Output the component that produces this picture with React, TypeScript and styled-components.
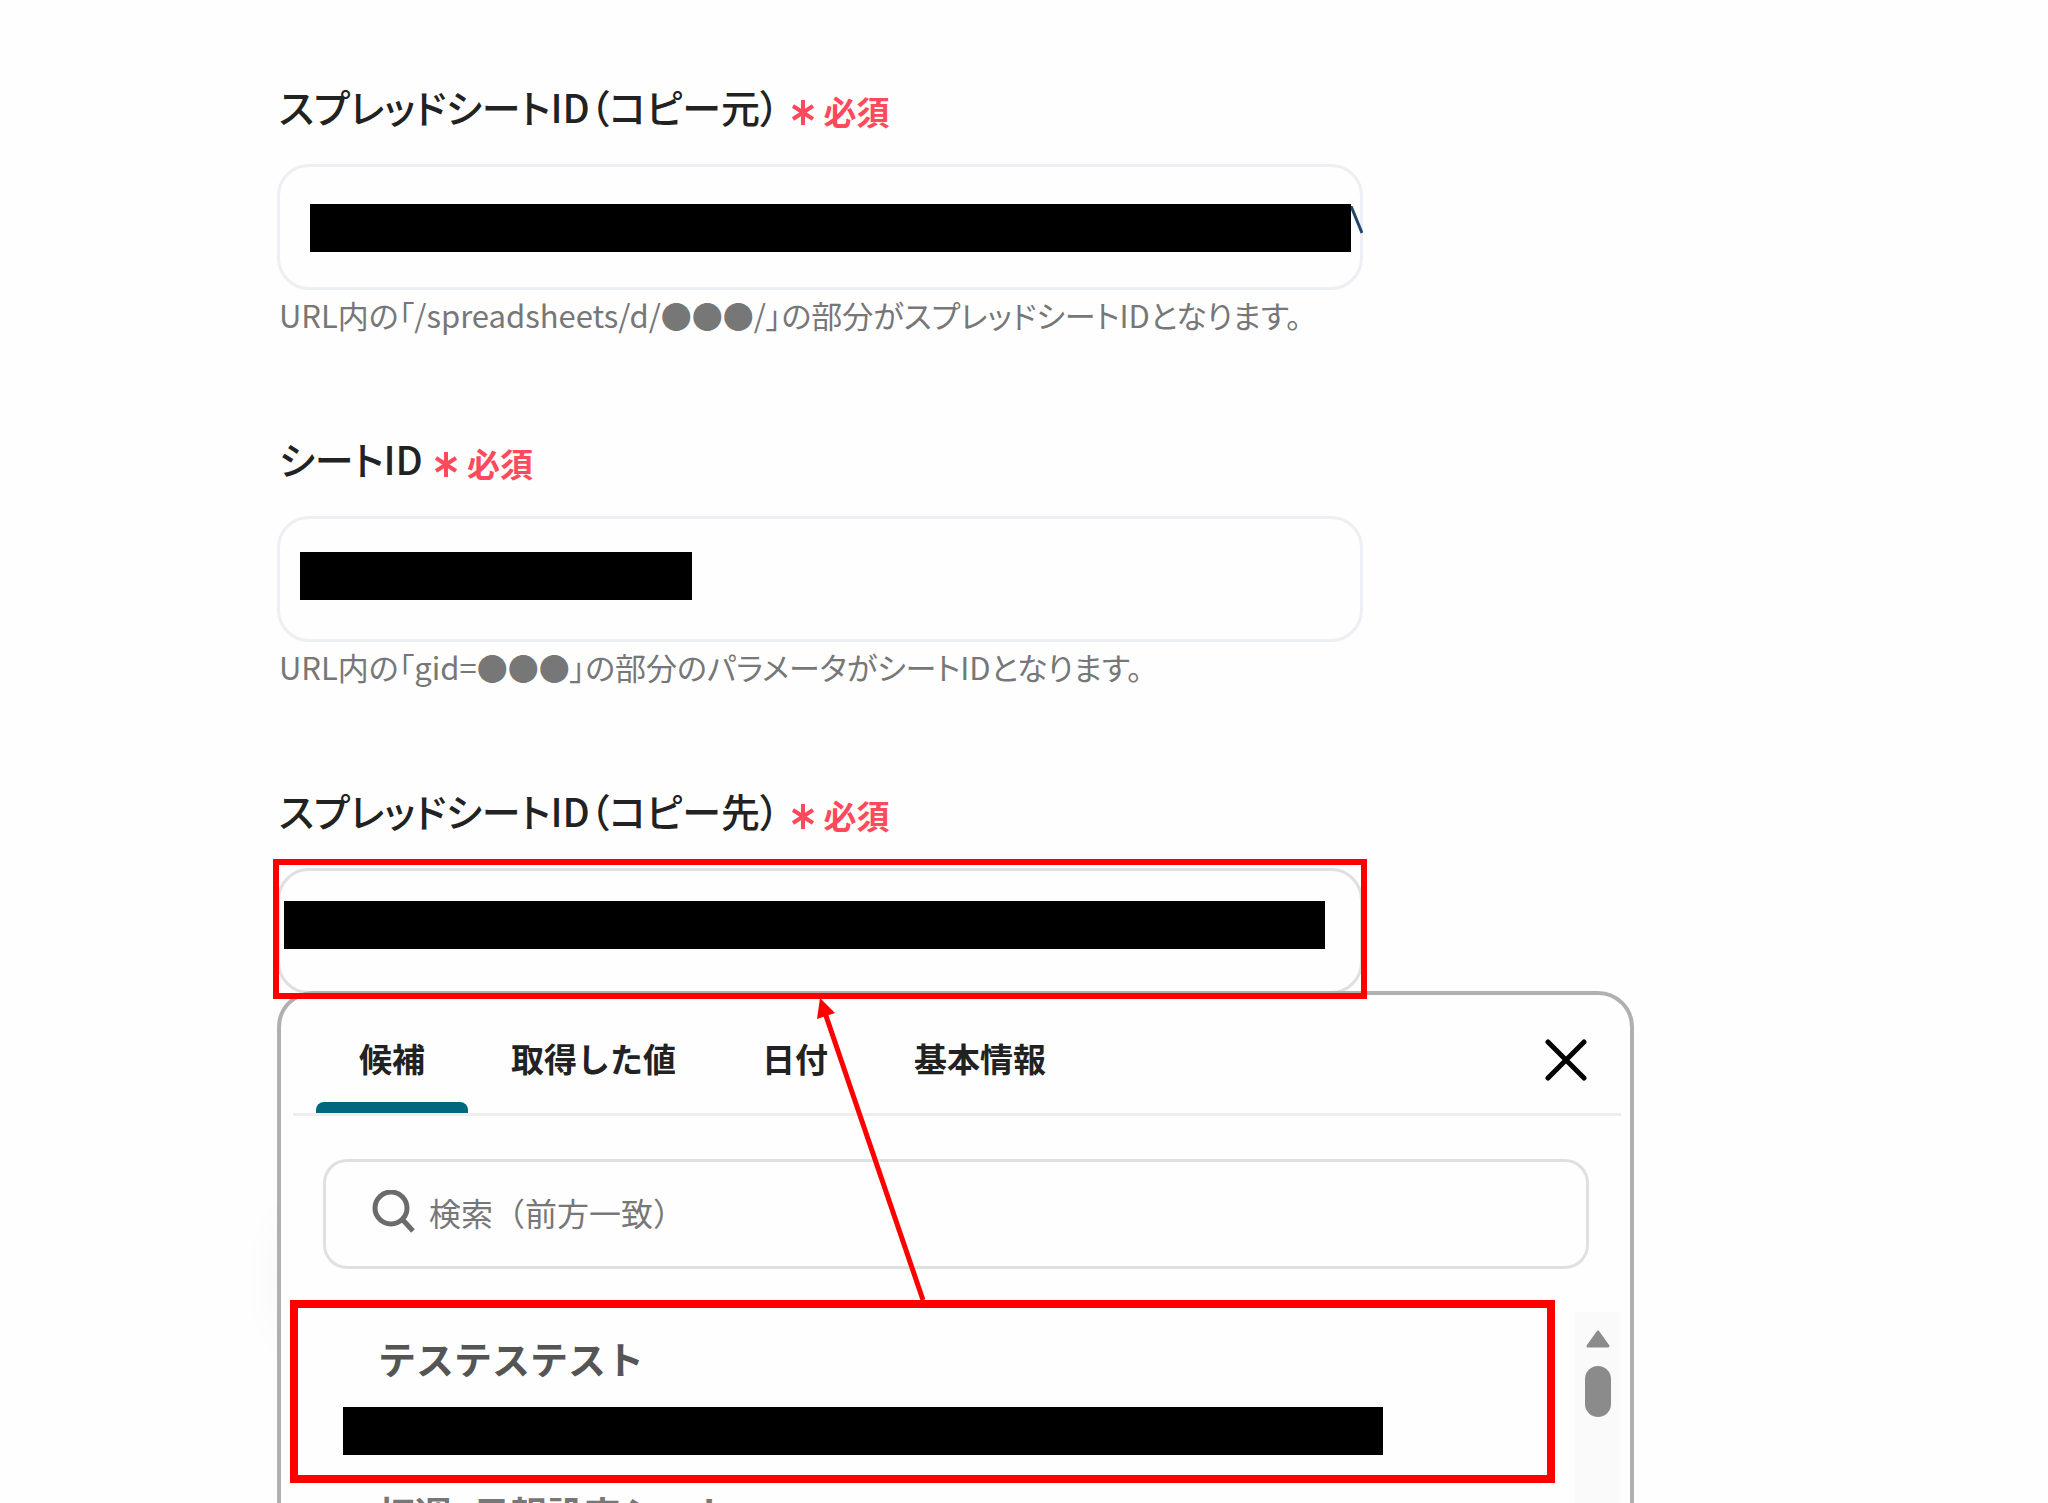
import React from "react";
import styled, { createGlobalStyle } from "styled-components";

const GlobalStyle = createGlobalStyle`
  *, *::before, *::after { box-sizing: border-box; }
  body {
    margin: 0;
    background: #fefefe;
    color: #222;
    font-family: "Noto Sans CJK JP", sans-serif;
  }
  button, input { font: inherit; color: inherit; margin: 0; padding: 0; }
`;

const Page = styled.main`
  height: 100vh;
  overflow: hidden;
  padding: 82px 20.2% 0 277px;
`;

const Form = styled.form`
  display: flex;
  flex-direction: column;
  position: relative;
`;

const Field = styled.div`
  display: flex;
  flex-direction: column;
  height: 352px;
  margin-right: 20%;
`;

const Heading = styled.div`
  display: flex;
  align-items: center;
  gap: 10px;
  height: 48px;
  margin-bottom: 34px;
  padding-left: 2px;
`;

const Label = styled.label`
  font-size: 39px;
  line-height: 48px;
  font-weight: 500;
  font-feature-settings: "palt";
`;

const Required = styled.span`
  display: flex;
  align-items: center;
  gap: 8px;
  padding-top: 9px;
  color: #ff4a5c;
  font-size: 33px;
  line-height: 40px;
  font-weight: 700;
`;

const InputWrap = styled.div`
  position: relative;
  flex: none;
`;

const TextInput = styled.input<{ $tone?: string }>`
  display: block;
  width: 100%;
  height: 126px;
  padding: 0 32px;
  border: 3px solid ${(p) => p.$tone ?? "#eceff3"};
  border-radius: 32px;
  background: #fefefe;
  font-size: 32px;
  outline: none;
`;

const Mask = styled.span<{ $left: number; $top: number; $width: string }>`
  position: absolute;
  left: ${(p) => p.$left}px;
  top: ${(p) => p.$top}px;
  width: ${(p) => p.$width};
  height: 48px;
  background: #000;
`;

const Overflow = styled.svg`
  position: absolute;
  right: 0;
  top: 42px;
`;

const Hint = styled.p`
  margin: 5px 0 0;
  padding-left: 2px;
  font-size: 31px;
  line-height: 40px;
  color: #777;
  white-space: nowrap;
  font-feature-settings: "palt";
`;

const Highlight = styled.span`
  position: absolute;
  inset: -9px -4px -5px -4px;
  border: 6px solid #f00;
  z-index: 2;
`;

const Panel = styled.section`
  position: absolute;
  top: 909px;
  left: 0;
  right: 0;
  height: 700px;
  padding: 0 9px 0 12px;
  border: 4px solid #b0b0b0;
  border-radius: 36px;
  background: #fefefe;
`;

const Glow = styled.span`
  position: absolute;
  top: 1132px;
  left: 6px;
  width: 40px;
  height: 128px;
  border-radius: 50%;
  box-shadow: 0 0 48px rgba(0, 0, 0, 0.06);
`;

const TabBar = styled.div`
  display: flex;
  align-items: stretch;
  height: 121px;
  padding: 0 34px 0 23px;
  border-bottom: 3px solid #eee;
`;

const Tab = styled.button<{ $active?: boolean }>`
  position: relative;
  padding: 7px 43px 0;
  border: 0;
  background: none;
  font-size: 33px;
  line-height: 48px;
  font-weight: 700;
  &::after {
    content: "";
    display: ${(p) => (p.$active ? "block" : "none")};
    position: absolute;
    inset: auto 0 0 0;
    height: 11px;
    border-radius: 8px 8px 0 0;
    background: #03667f;
  }
`;

const Close = styled.button`
  display: flex;
  align-items: center;
  margin-left: auto;
  padding-top: 12px;
  border: 0;
  background: none;
`;

const Search = styled.label`
  display: flex;
  align-items: center;
  gap: 13px;
  height: 110px;
  margin: 43px 32px 0 30px;
  padding: 0 46px 4px;
  border: 3px solid #e0e0e0;
  border-radius: 24px;
`;

const SearchInput = styled.input`
  flex: 1;
  min-width: 0;
  height: 48px;
  border: 0;
  outline: none;
  background: none;
  font-size: 32px;
  &::placeholder { color: #777; opacity: 1; }
`;

const Results = styled.div`
  display: flex;
  justify-content: space-between;
  margin-top: 31px;
`;

const List = styled.ul`
  flex: 1;
  margin: 0 20px 0 0;
  padding: 0;
  list-style: none;
`;

const Item = styled.li`
  position: relative;
  height: 183px;
  margin-left: -3px;
  padding: 26px 0 0 80px;
  border: 8px solid #f00;
  font-size: 38px;
  line-height: 48px;
  font-weight: 700;
  color: #555;
`;

const NextItem = styled(Item)`
  padding-top: 0;
  border-color: transparent;
  font-size: 37px;
  line-height: 44px;
  color: #777;
`;

const Track = styled.div`
  display: flex;
  flex-direction: column;
  align-items: center;
  gap: 18px;
  width: 46px;
  height: 300px;
  margin-top: 12px;
  padding-top: 18px;
  background: #fafafa;
`;

const Thumb = styled.span`
  width: 26px;
  height: 51px;
  border-radius: 13px;
  background: #8b8b8b;
`;

const Arrow = styled.svg`
  position: absolute;
  left: 530px;
  top: 914px;
  z-index: 3;
  pointer-events: none;
`;

function Asterisk() {
  return (
    <svg width="26" height="28" viewBox="0 0 26 28" aria-hidden="true">
      <path d="M13 3V28M3 9L23 22M23 9L3 22" stroke="currentColor" strokeWidth="4" />
    </svg>
  );
}

function FieldHeading({ id, text }: { id: string; text: string }) {
  return (
    <Heading>
      <Label htmlFor={id}>{text}</Label>
      <Required>
        <Asterisk />
        必須
      </Required>
    </Heading>
  );
}

export default function App() {
  return (
    <Page>
      <GlobalStyle />
      <Form>
        <Field>
          <FieldHeading id="source" text="スプレッドシートID（コピー元）" />
          <InputWrap>
            <TextInput id="source" />
            <Mask $left={33} $top={40} $width="calc(100% - 45px)" />
            <Overflow width="12" height="30" viewBox="0 0 12 30" aria-hidden="true">
              <path d="M0 0L11 27" stroke="#23456b" strokeWidth="3" />
            </Overflow>
          </InputWrap>
          <Hint>URL内の「/spreadsheets/d/●●●/」の部分がスプレッドシートIDとなります。</Hint>
        </Field>
        <Field>
          <FieldHeading id="sheet" text="シートID" />
          <InputWrap>
            <TextInput id="sheet" />
            <Mask $left={23} $top={36} $width="392px" />
          </InputWrap>
          <Hint>URL内の「gid=●●●」の部分のパラメータがシートIDとなります。</Hint>
        </Field>
        <Field>
          <FieldHeading id="target" text="スプレッドシートID（コピー先）" />
          <InputWrap>
            <TextInput id="target" $tone="#e0e0e0" />
            <Mask $left={7} $top={33} $width="calc(100% - 45px)" />
            <Highlight />
          </InputWrap>
        </Field>
        <Glow />
        <Panel>
          <TabBar role="tablist">
            <Tab type="button" role="tab" aria-selected="true" $active>候補</Tab>
            <Tab type="button" role="tab">取得した値</Tab>
            <Tab type="button" role="tab">日付</Tab>
            <Tab type="button" role="tab">基本情報</Tab>
            <Close type="button" aria-label="閉じる">
              <svg width="42" height="42" viewBox="0 0 42 42" aria-hidden="true">
                <path d="M3 3L39 39M39 3L3 39" stroke="#000" strokeWidth="5" strokeLinecap="round" />
              </svg>
            </Close>
          </TabBar>
          <Search>
            <svg width="44" height="44" viewBox="0 0 44 44" fill="none" stroke="#6b6b6b" strokeWidth="5" aria-hidden="true">
              <circle cx="19" cy="18" r="16" />
              <path d="M30 29L41 41" />
            </svg>
            <SearchInput placeholder="検索（前方一致）" aria-label="検索" />
          </Search>
          <Results>
            <List>
              <Item>
                テステステスト
                <Mask $left={45} $top={99} $width="calc(100% - 209px)" />
              </Item>
              <NextItem>初週_日報設定シート</NextItem>
            </List>
            <Track>
              <svg width="24" height="18" viewBox="0 0 24 18" aria-hidden="true">
                <path d="M12 2L22 16H2Z" fill="#8b8b8b" stroke="#8b8b8b" strokeWidth="3" strokeLinejoin="round" />
              </svg>
              <Thumb />
            </Track>
          </Results>
        </Panel>
        <Arrow width="130" height="306" viewBox="0 0 130 306" aria-hidden="true">
          <path d="M17 14L116 304" stroke="#f00" strokeWidth="5" />
          <path d="M13 2L10 23L28 17Z" fill="#f00" />
        </Arrow>
      </Form>
    </Page>
  );
}
